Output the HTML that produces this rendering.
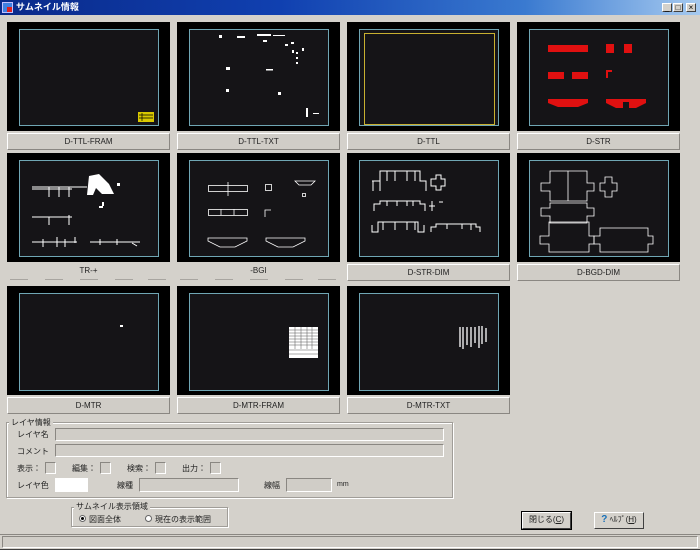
<!DOCTYPE html>
<html><head><meta charset="utf-8">
<style>
*{margin:0;padding:0;box-sizing:border-box}
body{width:700px;height:550px;background:#d4d1cb;position:relative;overflow:hidden;font-family:"Liberation Sans","Noto Sans CJK JP",sans-serif;font-size:8px;color:#222}
.a{position:absolute}
.title{left:0;top:0;width:700px;height:15px;background:linear-gradient(90deg,#0a2a8a,#1040b0 40%,#3a7ad0 75%,#a6caf0);color:#fff;font-size:9px;line-height:15px;padding-left:16px;font-weight:bold}
.tb{top:3px;width:10px;height:9px;background:#d4d1cb;border:1px solid;border-color:#fff #404040 #404040 #fff;font-size:8px;line-height:7px;text-align:center;color:#000}
.cell{width:163px}
.thumb{width:163px;height:109px;background:#000}
.lab{width:163px;height:17px;background:#d0cdc7;border:1px solid;border-color:#fff #8a8782 #8a8782 #fff;text-align:center;line-height:15px;font-size:8px;color:#222}
.grp{border:1px solid #a09d98;box-shadow:1px 1px 0 #fff inset,1px 1px 0 #fff}
.gt{background:#d4d1cb;padding:0 2px;font-size:8px}
.inp{border:1px solid;border-color:#8a8782 #fff #fff #8a8782;background:#d0cdc7}
.btn{border:1px solid;border-color:#fff #404040 #404040 #fff;background:#d4d1cb;text-align:center;font-size:8px;line-height:14px}
</style></head><body>
<div class="a title">サムネイル情報</div>
<div class="a" style="left:2px;top:2px;width:11px;height:11px;background:#4080e0;border:1px solid #c0c0ff"><div style="width:5px;height:5px;background:#e02020;margin:4px 0 0 4px"></div></div>
<div class="a tb" style="left:662px">_</div>
<div class="a tb" style="left:673px">□</div>
<div class="a tb" style="left:686px">×</div>

<!-- row 1 -->
<div class="a cell" style="left:7px;top:22px"><svg class="thumb" width="163" height="109"><rect width="163" height="109" fill="#000"/><rect x="12.5" y="7.5" width="139" height="96" fill="#151417" stroke="#6fa6b4"/><rect x="131" y="90" width="16" height="10" fill="#d8c800"/><path d="M132 93h14M132 96h14M135 91v8" stroke="#000" stroke-width=".7"/></svg><div class="lab">D-TTL-FRAM</div></div>
<div class="a cell" style="left:177px;top:22px"><svg class="thumb" width="163" height="109"><rect width="163" height="109" fill="#000"/><rect x="12.5" y="7.5" width="139" height="96" fill="#151417" stroke="#6fa6b4"/><g fill="#fff"><rect x="42" y="13" width="3" height="3"/><rect x="60" y="14" width="8" height="2"/><rect x="80" y="12" width="14" height="2"/><rect x="96" y="13" width="12" height="1"/><rect x="86" y="18" width="4" height="2"/><rect x="108" y="22" width="3" height="2"/><rect x="114" y="20" width="3" height="2"/><rect x="115" y="28" width="2" height="3"/><rect x="125" y="26" width="2" height="3"/><rect x="119" y="30" width="2" height="2"/><rect x="119" y="35" width="2" height="2"/><rect x="119" y="40" width="2" height="2"/><rect x="49" y="45" width="4" height="3"/><rect x="89" y="47" width="7" height="1.5"/><rect x="49" y="67" width="3" height="3"/><rect x="101" y="70" width="3" height="3"/><rect x="129" y="86" width="2" height="9"/><rect x="136" y="91" width="6" height="1"/></g></svg><div class="lab">D-TTL-TXT</div></div>
<div class="a cell" style="left:347px;top:22px"><svg class="thumb" width="163" height="109"><rect width="163" height="109" fill="#000"/><rect x="12.5" y="7.5" width="139" height="96" fill="#151417" stroke="#6fa6b4"/><rect x="17.5" y="11.5" width="130" height="91" fill="none" stroke="#c8b030"/></svg><div class="lab">D-TTL</div></div>
<div class="a cell" style="left:517px;top:22px"><svg class="thumb" width="163" height="109"><rect width="163" height="109" fill="#000"/><rect x="12.5" y="7.5" width="139" height="96" fill="#151417" stroke="#6fa6b4"/><g fill="#e01010"><rect x="31" y="23" width="40" height="7"/><rect x="89" y="22" width="8" height="9"/><rect x="107" y="22" width="8" height="9"/><rect x="31" y="50" width="16" height="7"/><rect x="55" y="50" width="16" height="7"/><rect x="89" y="48" width="6" height="2"/><rect x="89" y="48" width="2" height="8"/><path d="M31 77h40v4l-10 4h-20l-10-4z"/><path d="M89 77h40v4l-10 5h-7v-6h-6v6h-7l-10-5z"/></g></svg><div class="lab">D-STR</div></div>

<!-- row 2 -->
<div class="a cell" style="left:7px;top:153px"><svg class="thumb" width="163" height="109"><rect width="163" height="109" fill="#000"/><rect x="12.5" y="7.5" width="139" height="96" fill="#151417" stroke="#6fa6b4"/><g stroke="#fff" fill="none" stroke-width="1"><path d="M25 34h55M25 36h40M42 34v10M52 34v10M62 34v10M25 64h40M42 64v8M62 62v10M25 112h0M25 89h45M36 86v8M50 84v10M58 86v8M68 84v6M83 89h50M93 86v6M110 86v6M125 90l5 3"/></g><g fill="#fff"><path d="M82 23l10-2 10 10 5 10h-12l-6-6-3 7h-6z"/><rect x="110" y="30" width="3" height="3"/><rect x="92" y="53" width="4" height="2"/><rect x="95" y="49" width="2" height="4"/></g><g stroke="#000" stroke-width="3"><path d="M10 106h10M30 106h15M55 106h15M80 106h15M105 106h15M130 106h15"/></g></svg><div class="lab" style="border:none;background:none">TR-+</div></div>
<div class="a cell" style="left:177px;top:153px"><svg class="thumb" width="163" height="109"><rect width="163" height="109" fill="#000"/><rect x="12.5" y="7.5" width="139" height="96" fill="#151417" stroke="#6fa6b4"/><g stroke="#fff" fill="none" stroke-width=".8"><rect x="31.5" y="32.5" width="39" height="6"/><path d="M51 29v14"/><rect x="88.5" y="31.5" width="6" height="6"/><path d="M118 28h20l-4 4h-12z"/><rect x="125.5" y="40.5" width="3" height="3"/><rect x="31.5" y="56.5" width="39" height="6"/><path d="M44 56v6M57 56v6M88 64v-7h6"/><path d="M31 85h39v3l-12 6h-15l-12-6z"/><path d="M89 85h39v3l-12 6h-15l-12-6z"/></g></svg><div class="lab" style="border:none;background:none">-BGI</div></div>
<div class="a cell" style="left:347px;top:153px"><svg class="thumb" width="163" height="109"><rect width="163" height="109" fill="#000"/><rect x="12.5" y="7.5" width="139" height="96" fill="#151417" stroke="#6fa6b4"/><g stroke="#fff" fill="none" stroke-width="1"><path d="M25 28h8v-10h40v10h6v10M33 18v20M40 18v10M48 18v10M60 18v10M68 18v10M26 28v10"/><path d="M84 26h5v-4h5v4h4v7h-4v4h-5v-4h-5z"/><path d="M27 58v-7h6v-3h40v3h5v7M40 48v5M50 48v5M60 48v5M66 48v5"/><path d="M85 48v10M82 53h6M92 49h4"/><path d="M25 72v7h6v-10h40v10h6v-7M36 69v8M48 69v8M60 69v8M68 69v8"/><path d="M84 79v-5h5v-3h40v3h4v5M100 71v5M115 71v5M124 71v6"/></g></svg><div class="lab">D-STR-DIM</div></div>
<div class="a cell" style="left:517px;top:153px"><svg class="thumb" width="163" height="109"><rect width="163" height="109" fill="#000"/><rect x="12.5" y="7.5" width="139" height="96" fill="#151417" stroke="#6fa6b4"/><g stroke="#fff" fill="none" stroke-width=".8"><path d="M24 30h9v-12h37v12h7v8h-7v10h-37v-10h-9zM51 18v30"/><path d="M83 30h5v-6h7v6h5v8h-5v6h-7v-6h-5z"/><path d="M24 55h9v-5h37v5h7v8h-7v7h-37v-7h-9z"/><path d="M23 83h9v-14h40v14h5v8h-5v8h-40v-8h-9z"/><path d="M77 83h6v-8h48v8h5v8h-5v8h-48v-8h-6z"/></g></svg><div class="lab">D-BGD-DIM</div></div>

<div class="a" style="left:7px;top:264px;width:333px;height:18px;background:#d4d1cb"></div>
<div class="a" style="left:7px;top:263px;width:163px;text-align:center;font-size:8px;line-height:15px">TR-+</div>
<div class="a" style="left:177px;top:263px;width:163px;text-align:center;font-size:8px;line-height:15px">-BGI</div>
<svg class="a" style="left:0;top:278px" width="340" height="3"><path d="M10 1.5h18M45 1.5h18M80 1.5h18M115 1.5h18M148 1.5h18M180 1.5h18M215 1.5h18M250 1.5h18M285 1.5h18M318 1.5h18" stroke="#a8a5a0"/></svg>

<!-- row 3 -->
<div class="a cell" style="left:7px;top:286px"><svg class="thumb" width="163" height="110"><rect width="163" height="110" fill="#000"/><rect x="12.5" y="7.5" width="139" height="97" fill="#151417" stroke="#6fa6b4"/><rect x="113" y="39" width="3" height="2" fill="#fff"/></svg><div class="lab">D-MTR</div></div>
<div class="a cell" style="left:177px;top:286px"><svg class="thumb" width="163" height="110"><rect width="163" height="110" fill="#000"/><rect x="12.5" y="7.5" width="139" height="97" fill="#151417" stroke="#6fa6b4"/><rect x="112" y="41" width="29" height="31" fill="#fff"/><path d="M112 44h29M112 47h29M112 50h29M112 53h29M112 56h29M112 59h29M112 64h29M112 68h29M118 41v22M124 41v22M130 41v22M135 41v22" stroke="#555" stroke-width=".5"/></svg><div class="lab">D-MTR-FRAM</div></div>
<div class="a cell" style="left:347px;top:286px"><svg class="thumb" width="163" height="110"><rect width="163" height="110" fill="#000"/><rect x="12.5" y="7.5" width="139" height="97" fill="#151417" stroke="#6fa6b4"/><path d="M113 41v20M116 41v22M120 41v18M124 41v20M128 41v16M132 40v22M135 40v18M139 42v14" stroke="#fff" stroke-width="1.3"/></svg><div class="lab">D-MTR-TXT</div></div>

<!-- layer info -->
<div class="a grp" style="left:6px;top:422px;width:447px;height:76px"></div>
<div class="a gt" style="left:9px;top:417px">レイヤ情報</div>
<div class="a" style="left:17px;top:429px">レイヤ名</div>
<div class="a inp" style="left:55px;top:428px;width:389px;height:13px"></div>
<div class="a" style="left:17px;top:446px">コメント</div>
<div class="a inp" style="left:55px;top:444px;width:389px;height:13px"></div>
<div class="a" style="left:17px;top:463px">表示：</div><div class="a inp" style="left:45px;top:462px;width:11px;height:12px"></div>
<div class="a" style="left:72px;top:463px">編集：</div><div class="a inp" style="left:100px;top:462px;width:11px;height:12px"></div>
<div class="a" style="left:127px;top:463px">検索：</div><div class="a inp" style="left:155px;top:462px;width:11px;height:12px"></div>
<div class="a" style="left:182px;top:463px">出力：</div><div class="a inp" style="left:210px;top:462px;width:11px;height:12px"></div>
<div class="a" style="left:17px;top:480px">レイヤ色</div>
<div class="a" style="left:55px;top:478px;width:33px;height:14px;background:#fff"></div>
<div class="a" style="left:117px;top:480px">線種</div>
<div class="a inp" style="left:139px;top:478px;width:100px;height:14px"></div>
<div class="a" style="left:264px;top:480px">線幅</div>
<div class="a inp" style="left:286px;top:478px;width:46px;height:14px"></div>
<div class="a" style="left:337px;top:481px;font-size:7px">mm</div>

<div class="a grp" style="left:71px;top:507px;width:157px;height:20px"></div>
<div class="a gt" style="left:74px;top:501px">サムネイル表示領域</div>
<div class="a" style="left:79px;top:515px;width:7px;height:7px;border-radius:50%;background:#fff;border:1px solid #666"><div style="width:3px;height:3px;background:#000;border-radius:50%;margin:1px"></div></div>
<div class="a" style="left:89px;top:514px">図面全体</div>
<div class="a" style="left:145px;top:515px;width:7px;height:7px;border-radius:50%;background:#fff;border:1px solid #666"></div>
<div class="a" style="left:155px;top:514px">現在の表示範囲</div>

<div class="a btn" style="left:522px;top:512px;width:49px;height:17px;outline:1px solid #000">閉じる(<u>C</u>)</div>
<div class="a btn" style="left:594px;top:512px;width:50px;height:17px"><b style="color:#1870b8;font-size:10px">?</b> ﾍﾙﾌﾟ(<u>H</u>)</div>

<div class="a" style="left:0;top:534px;width:700px;height:1px;background:#8a8782"></div>
<div class="a inp" style="left:2px;top:536px;width:696px;height:12px"></div>
<div class="a" style="left:0;top:549px;width:700px;height:1px;background:#404040"></div>
</body></html>
